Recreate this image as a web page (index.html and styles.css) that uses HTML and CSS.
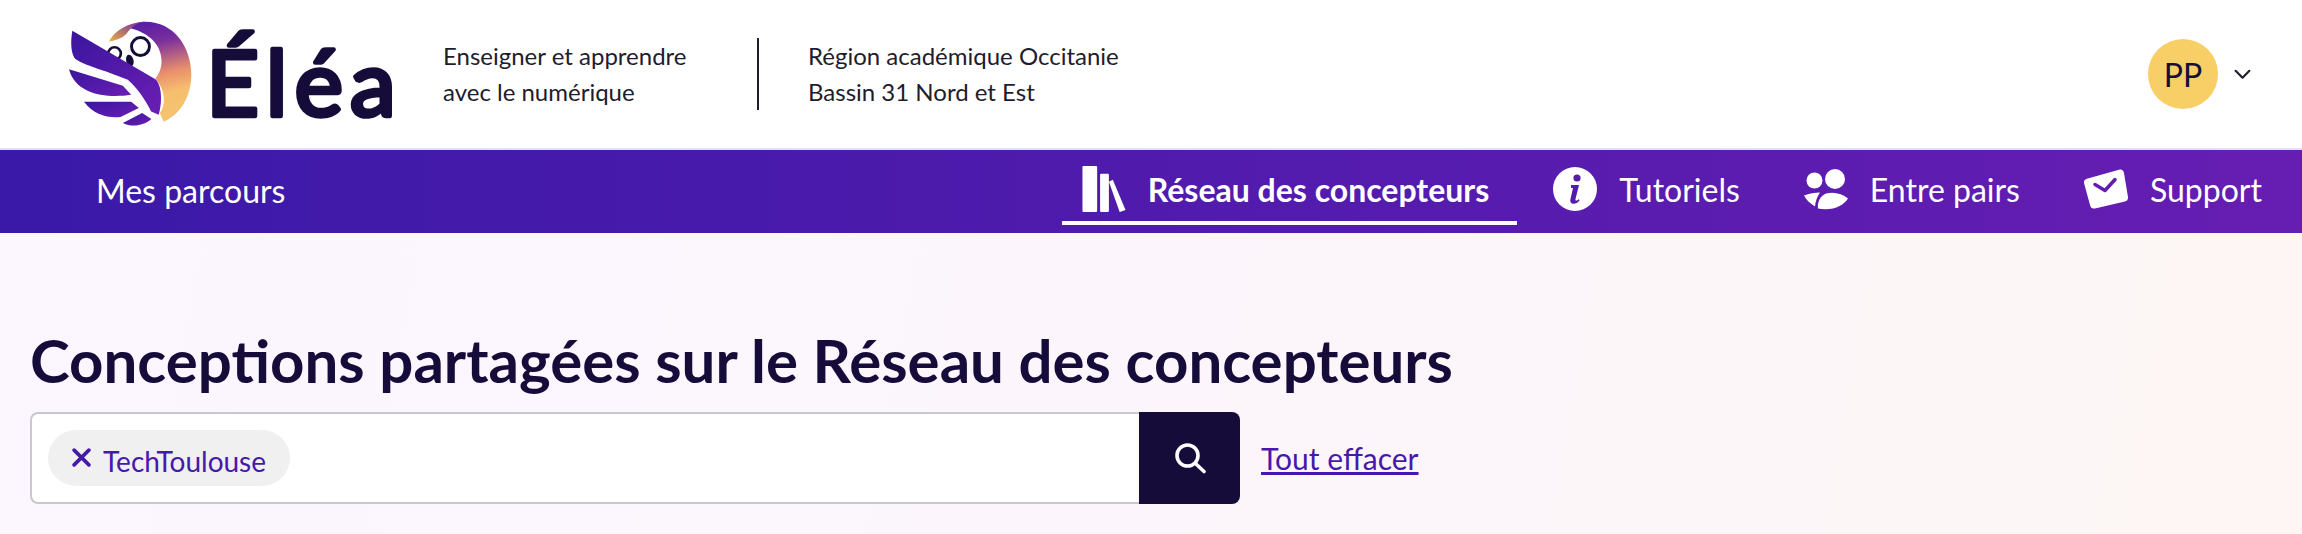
FILE: index.html
```html
<!DOCTYPE html>
<html lang="fr">
<head>
<meta charset="utf-8">
<title>Éléa</title>
<link rel="stylesheet" href="styles.css">
</head>
<body>
<header class="topbar">
  <div class="brand">
    <svg class="owl" viewBox="80 60 380 325" aria-hidden="true">
      <defs>
        <linearGradient id="bodyGrad" x1="0.45" y1="0" x2="0.6" y2="1">
          <stop offset="0" stop-color="#5b1fa6"/>
          <stop offset="0.2" stop-color="#7a2f9c"/>
          <stop offset="0.52" stop-color="#e98f6c"/>
          <stop offset="0.72" stop-color="#f5bf6e"/>
          <stop offset="1" stop-color="#f5c470"/>
        </linearGradient>
        <linearGradient id="goldGrad" x1="0" y1="1" x2="1" y2="0">
          <stop offset="0" stop-color="#f0b040"/>
          <stop offset="1" stop-color="#6a25a5"/>
        </linearGradient>
        <linearGradient id="wingGrad" x1="0" y1="0" x2="1" y2="1">
          <stop offset="0" stop-color="#3a169e"/>
          <stop offset="1" stop-color="#6b1eb3"/>
        </linearGradient>
      </defs>
      <path fill="url(#bodyGrad)" d="M265 84C280 70 298 65 315 65C400 65 453 140 453 225C453 290 420 345 370 366L358 340C378 315 375 270 345 236C362 215 368 190 360 160C350 118 305 92 265 84Z"/>
      <path fill="url(#goldGrad)" d="M205 125C222 92 262 68 310 65C290 70 272 80 262 96C252 110 235 120 205 125Z"/>
      <circle cx="300" cy="140" r="27" fill="none" stroke="#160c3a" stroke-width="9"/>
      <circle cx="222" cy="161" r="19" fill="none" stroke="#160c3a" stroke-width="8"/>
      <ellipse cx="268" cy="182" rx="11" ry="18" fill="#160c3a" transform="rotate(-15 268 182)"/>
      <path fill="url(#wingGrad)" d="M95 92L345 238C362 252 368 300 355 345L332 335C315 300 290 265 262 240C205 215 140 200 105 178C92 165 88 130 95 92Z"/>
      <path fill="url(#wingGrad)" d="M85 208L247 258L272 285C200 296 105 285 85 208Z"/>
      <path fill="url(#wingGrad)" d="M130 306H272L295 325L240 352C200 356 160 345 130 306Z"/>
      <path fill="url(#wingGrad)" d="M247 370L305 340L333 358C310 378 275 384 247 370Z"/>
    </svg>
    <svg class="wordmark" viewBox="0 0 190 100" aria-label="Éléa"><text class="wordtext" x="-4" y="92">Éléa</text></svg>
  </div>
  <p class="tagline">Enseigner et apprendre<br>avec le numérique</p>
  <p class="region">Région académique Occitanie<br>Bassin 31 Nord et Est</p>
  <div class="account">
    <span class="avatar">PP</span>
    <svg class="chevron" viewBox="0 0 16 10" aria-hidden="true"><path d="M1.500 1.500L8 8L14.500 1.500" fill="none" stroke="#1f1c2e" stroke-width="2" stroke-linecap="round" stroke-linejoin="round"/></svg>
  </div>
</header>
<nav class="mainnav">
  <a class="navlink home">Mes parcours</a>
  <div class="navgroup">
    <a class="navlink active">
      <svg class="navicon" viewBox="0 0 44 47" aria-hidden="true">
        <rect x="0" y="0" width="15" height="47" rx="1" fill="#fff"/>
        <rect x="18" y="8" width="9" height="39" rx="1" fill="#fff"/>
        <path d="M27 16L31 14L44 45L38 47Z" fill="#fff"/>
      </svg>
      Réseau des concepteurs
    </a>
    <a class="navlink">
      <svg class="navicon" viewBox="0 0 44 44" aria-hidden="true">
        <circle cx="22" cy="22" r="22" fill="#fff"/>
        <circle cx="24" cy="11" r="3.600" fill="#541cab"/>
        <path d="M18 18H26L22.500 32C22 34 24 34 26 32L26.500 33.500C23 38 16 38 17.500 32L20 21H18Z" fill="#541cab"/>
      </svg>
      Tutoriels
    </a>
    <a class="navlink">
      <svg class="navicon" viewBox="0 0 44 41" aria-hidden="true">
        <circle cx="10.500" cy="12" r="8" fill="#fff"/>
        <circle cx="31" cy="10.500" r="10" fill="#fff"/>
        <path d="M0 27C5 25 11 24 16 24C13 28 11.500 33 11 38C6 35 2 31 0 27Z" fill="#fff"/>
        <path d="M14 40C13 33 17 27 22 25C30 23 38 25 44 30C40 37 28 43 14 40Z" fill="#fff"/>
      </svg>
      Entre pairs
    </a>
    <a class="navlink">
      <svg class="navicon" viewBox="0 0 44 39" aria-hidden="true">
        <path d="M4 13L36 4L40 28L10 35Z" fill="#fff" stroke="#fff" stroke-width="8" stroke-linejoin="round"/>
        <path d="M11 15L21 21L31 10" fill="none" stroke="#651db0" stroke-width="3.500" stroke-linecap="round" stroke-linejoin="round"/>
      </svg>
      Support
    </a>
  </div>
</nav>
<main class="content">
  <h1 class="title">Conceptions partagées sur le Réseau des concepteurs</h1>
  <div class="searchrow">
    <form class="search">
      <div class="field">
        <span class="chip">
          <svg class="chipx" viewBox="0 0 18 18" aria-hidden="true"><path d="M2 2L16 16M16 2L2 16" stroke="#4519a9" stroke-width="3.400" stroke-linecap="round"/></svg>
          <span class="chiptext">TechToulouse</span>
        </span>
      </div>
      <span class="searchbtn">
        <svg class="searchicon" viewBox="0 0 32 32" aria-hidden="true"><circle cx="13.500" cy="13.500" r="10.500" fill="none" stroke="#fff" stroke-width="3.600"/><path d="M21.500 21.500L30 29.500" stroke="#fff" stroke-width="3.600" stroke-linecap="round"/></svg>
      </span>
    </form>
    <a class="clear">Tout effacer</a>
  </div>
</main>
</body>
</html>
```
FILE: styles.css
```css
* { box-sizing: border-box; }
html, body { margin: 0; height: 100%; }
body {
  font-family: Lato, "Liberation Sans", sans-serif;
  color: #160c3a;
  background: linear-gradient(100deg, #fbf6ff 0%, #fcf6fb 60%, #fdf6f4 100%);
  overflow: hidden;
}
.topbar {
  height: 150px;
  background: #fff;
  border-bottom: 2px solid #e2e2ea;
  display: flex;
  align-items: center;
  padding: 0 51px 0 67px;
}
.brand { display: flex; align-items: center; width: 376px; }
.owl { width: 127px; height: 108px; margin-right: 16px; flex: none; }
.wordmark { width: 190px; height: 100px; flex: none; overflow: visible; }
.wordtext {
  font-family: Lato, sans-serif;
  font-size: 92px;
  font-weight: 400;
  letter-spacing: 7px;
  fill: #160c3a;
  stroke: #160c3a;
  stroke-width: 4.500px;
  stroke-linejoin: round;
  stroke-linecap: round;
}
.tagline, .region {
  margin: 0;
  font-size: 24px;
  line-height: 36px;
  color: #1f1c2e;
}
.tagline { width: 314px; }
.region { border-left: 2px solid #1f1c2e; padding-left: 49px; }
.account { margin-left: auto; display: flex; align-items: center; gap: 16px; }
.avatar {
  width: 70px;
  height: 70px;
  border-radius: 50%;
  background: #f7cf66;
  display: flex;
  align-items: center;
  justify-content: center;
  font-size: 32px;
  color: #160c3a;
}
.chevron { width: 17px; height: 11px; }
.mainnav {
  height: 83px;
  background: linear-gradient(90deg, #3a19a8 0%, #661db2 100%);
  display: flex;
  align-items: stretch;
  justify-content: space-between;
  padding: 0 40px 0 96px;
  color: #fff;
}
.navgroup { display: flex; align-items: stretch; gap: 20px; }
.navlink {
  display: flex;
  align-items: center;
  gap: 22px;
  font-size: 32px;
  padding: 0 22px;
  height: 78px;
}
.navgroup .navlink:last-child { padding-right: 0; }
.home { padding: 0; height: 81px; }
.active {
  font-weight: 700;
  border-bottom: 4px solid #fff;
  height: 75px;
  padding: 7px 28px 0 20px;
  margin-right: -6px;
}
.navicon { height: 46px; width: 44px; flex: none; }
.content { padding: 91px 30px 0; }
.title {
  margin: 0 0 16px;
  font-size: 60px;
  line-height: 72px;
  font-weight: 700;
  color: #160c3a;
}
.searchrow { display: flex; align-items: center; gap: 21px; }
.search { display: flex; width: 1210px; height: 92px; }
.field {
  flex: 1;
  background: #fff;
  border: 2px solid #c9c7cf;
  border-right: 0;
  border-radius: 8px 0 0 8px;
  padding: 16px;
  display: flex;
  align-items: center;
}
.chip {
  height: 56px;
  background: #f0f0f0;
  border-radius: 28px;
  padding: 0 24px;
  display: flex;
  align-items: center;
  gap: 12px;
  font-size: 28px;
  color: #4519a9;
}
.chiptext { padding-top: 5px; }
.chipx { width: 19px; height: 19px; margin-top: -2px; }
.searchbtn {
  width: 101px;
  background: #160c3a;
  border-radius: 0 8px 8px 0;
  display: flex;
  align-items: center;
  justify-content: center;
}
.searchicon { width: 32px; height: 32px; }
.clear {
  font-size: 30px;
  color: #4519a9;
  text-decoration: underline;
}
```
